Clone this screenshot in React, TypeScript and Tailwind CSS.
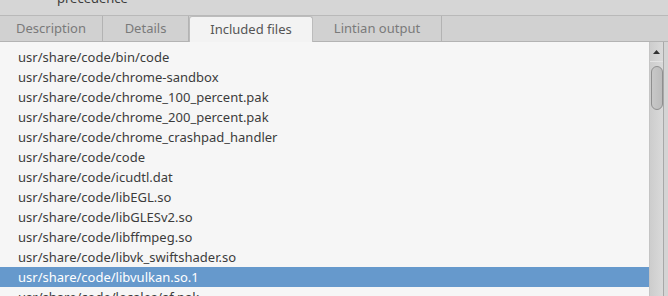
import React from 'react';

const files = [
  'usr/share/code/bin/code',
  'usr/share/code/chrome-sandbox',
  'usr/share/code/chrome_100_percent.pak',
  'usr/share/code/chrome_200_percent.pak',
  'usr/share/code/chrome_crashpad_handler',
  'usr/share/code/code',
  'usr/share/code/icudtl.dat',
  'usr/share/code/libEGL.so',
  'usr/share/code/libGLESv2.so',
  'usr/share/code/libffmpeg.so',
  'usr/share/code/libvk_swiftshader.so',
  'usr/share/code/libvulkan.so.1',
  'usr/share/code/locales/af.pak',
];

const tabs = [
  { label: 'Description', w: 'w-[103px]' },
  { label: 'Details', w: 'w-[86px]' },
  { label: 'Included files', w: 'w-[124px]', active: true },
  { label: 'Lintian output', w: 'w-[129px]' },
];

export default function App() {
  return (
    <div className="w-[668px] h-[296px] overflow-hidden bg-[#d6d6d6] flex flex-col font-['Noto_Sans',sans-serif] text-[13px]">
      {/* cut-off field above the notebook */}
      <div className="h-[16px] overflow-hidden border-b border-[#b9b9b9] shrink-0">
        <div className="ml-[57px] -mt-[11px] leading-[18px] text-[#3c3c3c]">precedence</div>
      </div>

      {/* tabs */}
      <div className="flex h-[26px] shrink-0 bg-[#d1d1d1]">
        {tabs.map(t =>
          t.active ? (
            <div
              key={t.label}
              className={`${t.w} bg-[#f3f3f3] border-x border-t border-[#bcbcbc] rounded-t-[3px] flex items-center justify-center text-[#555]`}
            >
              {t.label}
            </div>
          ) : (
            <div
              key={t.label}
              className={`${t.w} border-r border-b border-[#b3b3b3] flex items-center justify-center text-[#7a7a7a]`}
            >
              {t.label}
            </div>
          )
        )}
        <div className="flex-1 border-b border-[#b3b3b3]" />
      </div>

      {/* file list + scrollbar */}
      <div className="flex flex-1 min-h-0">
        <div className="flex-1 bg-[#f6f6f6] overflow-hidden">
          <div className="h-[5px] overflow-hidden">
            <div className="h-[20px] -mt-[15px] pl-[18px] leading-[20px] text-[#3c3c3c]">usr/share/code/bin</div>
          </div>
          {files.map(f => {
            const sel = f === 'usr/share/code/libvulkan.so.1';
            return (
              <div
                key={f}
                className={`h-[20px] pl-[18px] leading-[20px] whitespace-nowrap ${sel ? 'bg-[#6699cc] text-white' : 'text-[#3c3c3c]'}`}
              >
                {f}
              </div>
            );
          })}
        </div>

        <div className="w-[14px] bg-gradient-to-r from-[#cdcdcd] to-[#dadada] border-l border-[#c4c4c4] flex flex-col items-center">
          <div className="h-[20px] w-full border-b border-[#e4e4e4] flex items-center justify-center">
            <svg width="7" height="4" viewBox="0 0 7 4">
              <path d="M0 4 L3.5 0 L7 4 Z" fill="#333" />
            </svg>
          </div>
          <div className="mt-[4px] w-[12px] h-[44px] rounded-full border border-[#8f8f8f] bg-gradient-to-r from-[#c8c8c8] to-[#bcbcbc]" />
        </div>
        <div className="w-[1px] bg-[#a8a8a8]" />
        <div className="w-[4px] bg-[#d4d4d4]" />
      </div>
    </div>
  );
}
